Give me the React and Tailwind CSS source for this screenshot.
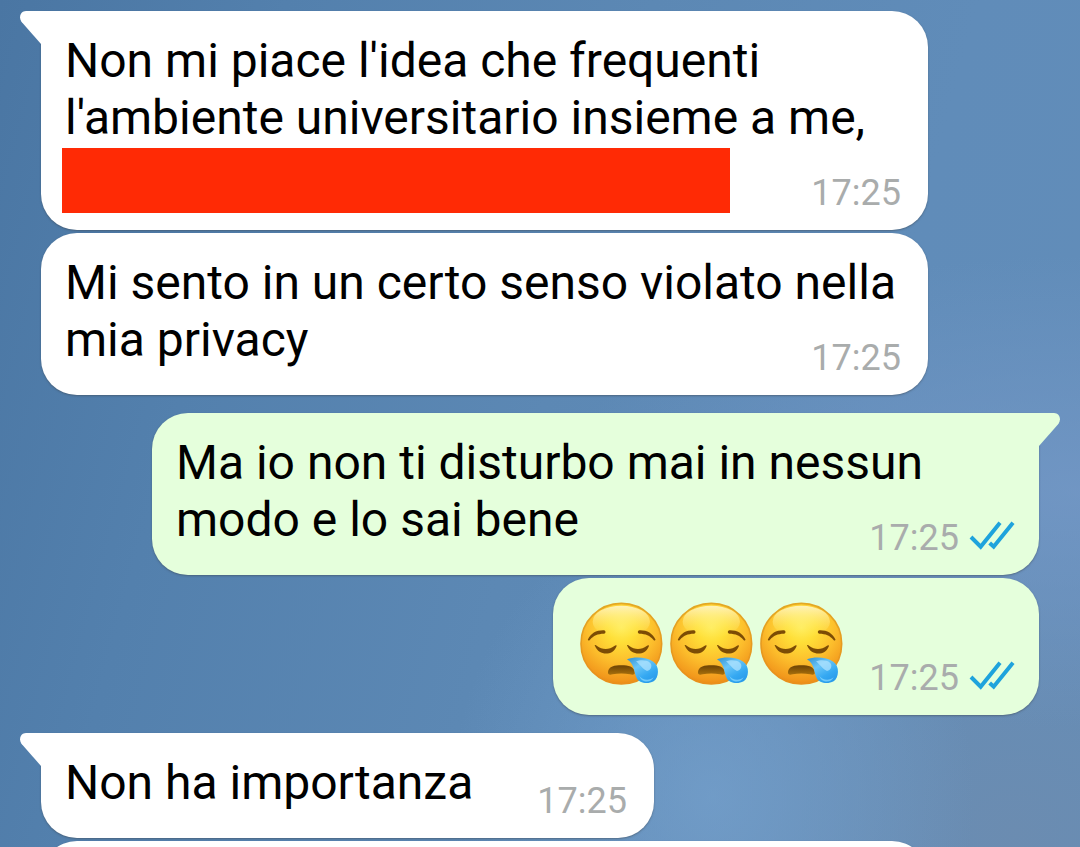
import React from "react";
import clsx from "clsx";

function Tail({ side }) {
  return (
    <svg
      viewBox="0 0 22 33"
      aria-hidden="true"
      className={clsx(
        "absolute top-0 h-[33px] w-[22px]",
        side === "left" ? "-left-[21px] text-white" : "-right-[21px] -scale-x-100 text-[#e5ffdc]"
      )}
    >
      <path d="M22 0H6C1 0-1.6 5.5 1.2 10.2L1.9 11.2L21 33H22Z" fill="currentColor" />
    </svg>
  );
}

function ReadChecks() {
  return (
    <svg viewBox="21 24 138 87" role="img" aria-label="Letto" className="h-[29px] w-[46px]">
      <g fill="none" stroke="#1fa3dc" strokeWidth="12" strokeLinejoin="miter">
        <path d="M27 72L56 101L114 29" />
        <path d="M83 90L95 101L153 29" />
      </g>
    </svg>
  );
}

function SleepyFace() {
  return (
    <svg viewBox="3 0 270 267" role="img" aria-label="Faccina assonnata" className="h-[89px] w-[90px]">
      <defs>
        <radialGradient id="face" cx="0.5" cy="0.3" r="0.72">
          <stop offset="0" stopColor="#ffec5a" />
          <stop offset="0.25" stopColor="#ffdf38" />
          <stop offset="0.6" stopColor="#fcbd2c" />
          <stop offset="0.9" stopColor="#f2981c" />
          <stop offset="1" stopColor="#e88614" />
        </radialGradient>
        <linearGradient id="shine" x1="0" y1="0" x2="0" y2="1">
          <stop offset="0" stopColor="#fff6c8" stopOpacity="0.9" />
          <stop offset="1" stopColor="#fff15c" stopOpacity="0" />
        </linearGradient>
        <linearGradient id="rim" x1="0" y1="0" x2="0" y2="1">
          <stop offset="0" stopColor="#e3a824" />
          <stop offset="1" stopColor="#e98f1c" />
        </linearGradient>
        <linearGradient id="mouth" x1="0" y1="0" x2="0" y2="1">
          <stop offset="0" stopColor="#6d4304" />
          <stop offset="1" stopColor="#a8700c" />
        </linearGradient>
        <linearGradient id="drop" x1="0" y1="0" x2="0.7" y2="1">
          <stop offset="0" stopColor="#2f8fd0" />
          <stop offset="0.4" stopColor="#6cc6f7" />
          <stop offset="0.75" stopColor="#35a9f2" />
          <stop offset="1" stopColor="#2a9bea" />
        </linearGradient>
      </defs>
      <circle cx="136" cy="134" r="121" fill="url(#face)" stroke="url(#rim)" strokeWidth="5" />
      <ellipse cx="136" cy="68" rx="86" ry="48" fill="url(#shine)" />
      <g fill="#7c4c05">
        <path d="M36 121C44 103 62 93 84 94C90 95 90 104 84 104C65 104 52 110 42 122C39 126 34 125 36 121Z" />
        <path d="M238 121C230 103 212 93 190 94C184 95 184 104 190 104C209 104 222 110 232 122C235 126 240 125 238 121Z" />
        <path d="M57 141C54 138 59 137 63 141C78 153 100 153 115 141C119 137 124 138 121 143C110 171 69 171 57 141Z" />
        <path d="M154 141C151 138 156 137 160 141C175 153 197 153 212 141C216 137 221 138 218 143C207 171 166 171 154 141Z" />
      </g>
      <path
        d="M96 219C98 202 116 199 136 199C158 199 174 203 176 219C178 227 171 229 162 226C146 223 126 223 110 226C101 229 95 227 96 219Z"
        fill="url(#mouth)"
      />
      <path
        d="M153 181C178 172 212 175 232 188C252 202 249 236 233 247C214 257 189 252 182 237C172 216 177 197 153 181Z"
        fill="url(#drop)"
      />
      <path d="M180 187C192 182 212 182 222 191C230 199 226 213 213 216C203 212 194 200 180 187Z" fill="#b5e6ff" opacity="0.7" />
      <path d="M190 231C199 244 221 246 233 235C226 252 197 253 190 231Z" fill="#8fdcff" opacity="0.7" />
    </svg>
  );
}

function Meta({ read, children }) {
  return (
    <div
      className={clsx(
        "flex items-baseline gap-2.5 self-end justify-self-end pb-[19px] text-[36px] leading-[36px] whitespace-nowrap text-[#a9acac] [grid-area:1/2]",
        read ? "pr-6" : "pr-[27px]"
      )}
    >
      <time dateTime={children}>{children}</time>
      {read && <ReadChecks />}
    </div>
  );
}

function Bubble({ mine, tail, time, inline, className, children }) {
  return (
    <li
      className={clsx(
        "relative grid w-fit max-w-[887px] rounded-[36px] shadow-[0_1px_2px_rgba(60,70,80,0.5)]",
        mine ? "self-end bg-[#e5ffdc]" : "self-start bg-white",
        tail && (mine ? "rounded-tr-none" : "rounded-tl-none"),
        className
      )}
    >
      {tail && <Tail side={mine ? "right" : "left"} />}
      <div className={clsx("pt-[21px] pb-[27px] pl-6", inline ? "[grid-area:1/1]" : "pr-6 [grid-area:1/1/2/3]")}>
        {children}
      </div>
      {time && <Meta read={mine}>{time}</Meta>}
    </li>
  );
}

export default function App() {
  return (
    <main className="h-screen overflow-hidden bg-[radial-gradient(ellipse_at_66%_94%,rgba(118,162,206,0.7),transparent_26%),radial-gradient(ellipse_at_100%_58%,rgba(116,152,198,0.8),transparent_34%),radial-gradient(ellipse_at_94%_98%,rgba(108,140,176,0.9),transparent_30%),linear-gradient(105deg,#4a76a3_0%,#5380ad_22%,#5c88b4_50%,#608cb9_75%,#628db9_100%)] font-['Roboto',sans-serif] text-[48px] leading-[57px] text-black">
      <ol className="flex flex-col px-[41px] pt-[11px]">
        <Bubble tail time="17:25">
          <p>Non mi piace l'idea che frequenti l'ambiente universitario insieme a me,</p>
          <div className="mt-0.5 -mb-2.5 -ml-[3px] h-[65px] w-[668px] bg-[#ff2a05]" />
        </Bubble>
        <Bubble time="17:25" className="mt-[3px]">
          <p>Mi sento in un certo senso violato nella mia privacy</p>
        </Bubble>
        <Bubble mine tail time="17:25" className="mt-[18px]">
          <p>Ma io non ti disturbo mai in nessun modo e lo sai bene</p>
        </Bubble>
        <Bubble mine inline time="17:25" className="mt-[3px] gap-x-[22px]">
          <div className="flex">
            <SleepyFace />
            <SleepyFace />
            <SleepyFace />
          </div>
        </Bubble>
        <Bubble tail inline time="17:25" className="mt-[18px] gap-x-16">
          <p>Non ha importanza</p>
        </Bubble>
        <Bubble className="mt-[3px] w-full">
          <div className="h-[57px]" />
        </Bubble>
      </ol>
    </main>
  );
}
